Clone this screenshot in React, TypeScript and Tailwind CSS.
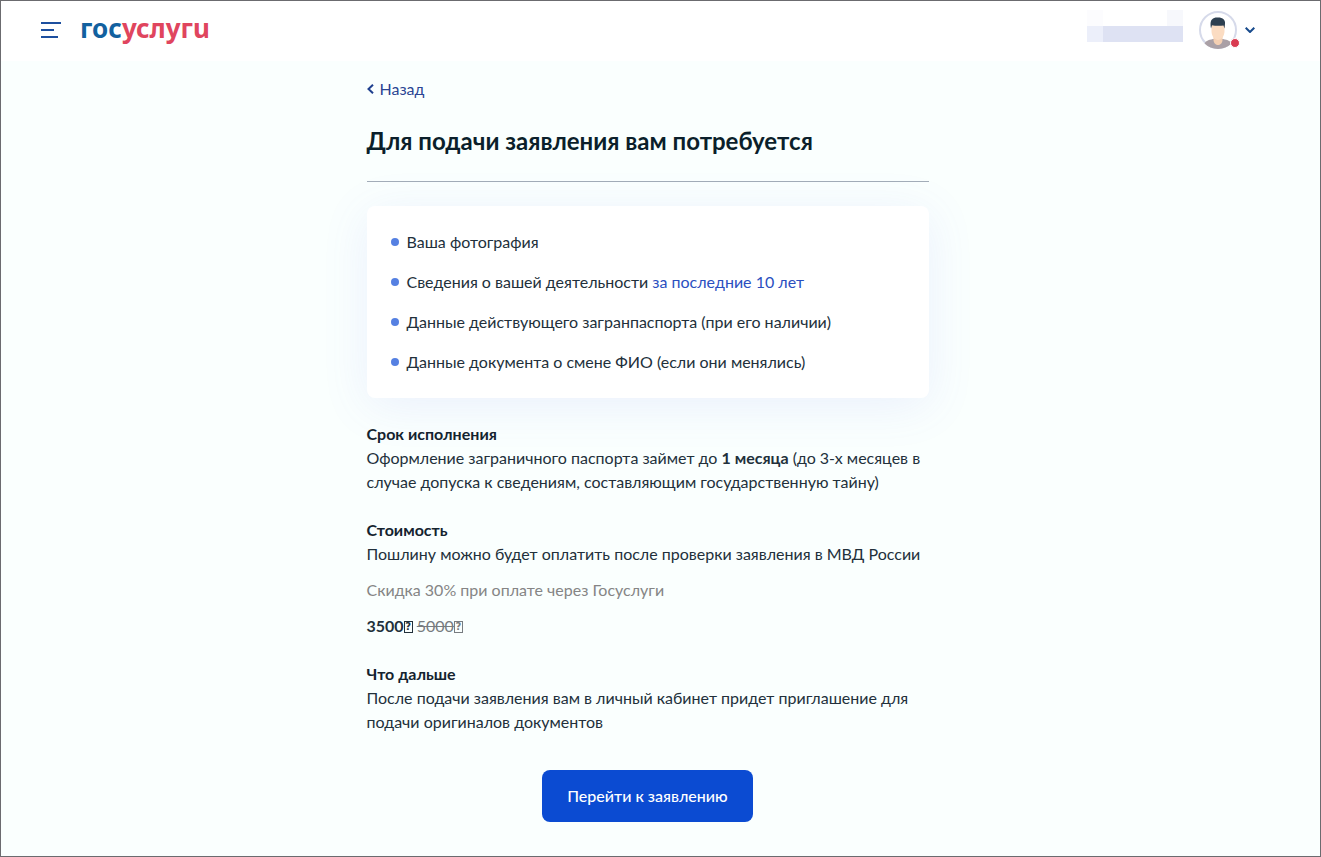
import React from "react";

const requirements: React.ReactNode[] = [
  "Ваша фотография",
  <>
    Сведения о вашей деятельности{" "}
    <a href="#period" className="text-[#2b4fbf]">
      за последние 10 лет
    </a>
  </>,
  "Данные действующего загранпаспорта (при его наличии)",
  "Данные документа о смене ФИО (если они менялись)",
];

function MissingGlyph() {
  return (
    <span className="inline-block h-3 w-[9px] border border-current text-center align-[2px] font-['DejaVu_Sans',sans-serif] text-[10px] leading-[10px] font-bold">
      ?
    </span>
  );
}

function Avatar() {
  return (
    <svg viewBox="0 0 38 38" className="size-[38px]" aria-hidden="true">
      <defs>
        <clipPath id="face">
          <circle cx="19" cy="19" r="19" />
        </clipPath>
      </defs>
      <circle cx="19" cy="19" r="18" fill="#fff" stroke="#d6daea" strokeWidth="2" />
      <g clipPath="url(#face)">
        <path d="M5 34c1-4 4-5 9-6h10c5 1 8 2 9 6l-6 6H11z" fill="#aaa0a6" />
        <path d="M14.500 23h9v6c0 3-2.500 5-4.500 5s-4.500-2-4.500-5z" fill="#f4cfb2" />
        <path d="M12.500 13c0-4 2-5 6.500-5s6.500 1 6.500 5v7c0 5-3 9-6.500 9s-6.500-4-6.500-9z" fill="#fbdcc2" />
        <path d="M12 17.500c-.8-5-.5-7.500 1-9 1.500-1.700 3.500-2.200 6-2 5 0 7.500 2.500 7 6.500l-.5 4.500-1-3c-3 .5-8.500.5-11.500-.3z" fill="#2d3f50" />
      </g>
    </svg>
  );
}

function Header() {
  return (
    <header className="flex h-[60px] items-center bg-white pr-[65px] pb-[3px] pl-10">
      <button type="button" aria-label="Меню" className="mr-[18px]">
        <svg viewBox="0 0 21 18" className="h-[18px] w-[21px]" fill="none" stroke="#1d4f9f" strokeWidth="2" aria-hidden="true">
          <path d="M0 2h20M0 9h13M0 16h17" />
        </svg>
      </button>
      <a href="#home" aria-label="Госуслуги" className="pb-1 font-['Noto_Sans',sans-serif] text-[26px] leading-8 font-bold text-[#12619f]">
        гос<span className="text-[#e0455e]">услугu</span>
      </a>
      <div className="ml-auto flex items-center gap-4">
        <div className="mb-2 flex h-8 w-24 flex-col" aria-hidden="true">
          <div className="flex h-4 justify-between">
            <span className="w-4 bg-[#fcfcfe]" />
            <span className="w-4 bg-[#f7f8fc]" />
          </div>
          <div className="flex h-4">
            <span className="w-4 bg-[#eceffa]" />
            <span className="flex-1 bg-[#dee2f3]" />
          </div>
        </div>
        <button type="button" aria-label="Профиль" className="flex items-center gap-2">
          <span className="relative">
            <Avatar />
            <span className="absolute -right-[3px] bottom-px size-[10px] rounded-full border border-white bg-[#d93a50]" />
          </span>
          <svg viewBox="0 0 10 6" className="h-[6px] w-[10px]" fill="none" stroke="#174a8c" strokeWidth="2" aria-hidden="true">
            <path d="M.7.7 5 5 9.300.7" />
          </svg>
        </button>
      </div>
    </header>
  );
}

function Section({ title, children }: { title: string; children: React.ReactNode }) {
  return (
    <section className="mt-6">
      <h2 className="font-bold text-[#14232f]">{title}</h2>
      {children}
    </section>
  );
}

export default function App() {
  return (
    <div className="min-h-screen border border-[#6b6b6f] bg-[#fafffe] font-[Lato,sans-serif] text-base leading-6 text-[#22303b]">
      <Header />
      <div className="pr-[26px]">
        <main className="mx-auto max-w-[562px] pt-4 pb-8">
          <a href="#back" className="inline-flex items-center gap-[6px] align-top text-[#2b4593]">
            <svg viewBox="0 0 7 10" className="h-[10px] w-[7px]" fill="none" stroke="#20408f" strokeWidth="2" aria-hidden="true">
              <path d="M6 .7 1.500 5 6 9.300" />
            </svg>
            Назад
          </a>
          <h1 className="mt-6 text-2xl leading-8 font-bold text-[#0b1f2b]">Для подачи заявления вам потребуется</h1>
          <hr className="mt-6 border-[#a3adb8]" />
          <ul className="mt-6 flex flex-col gap-4 rounded-lg bg-white p-6 shadow-[0_8px_48px_rgba(100,110,240,0.10)]">
            {requirements.map((item, index) => (
              <li key={index} className="flex items-center gap-2">
                <span className="size-2 rounded-full bg-[#5580e2]" />
                <span>{item}</span>
              </li>
            ))}
          </ul>
          <Section title="Срок исполнения">
            <p>
              Оформление заграничного паспорта займет до <b>1 месяца</b> (до 3-х месяцев в случае допуска к сведениям,
              составляющим государственную тайну)
            </p>
          </Section>
          <Section title="Стоимость">
            <p>Пошлину можно будет оплатить после проверки заявления в МВД России</p>
            <p className="mt-3 text-[#858585]">Скидка 30% при оплате через Госуслуги</p>
            <p className="mt-3">
              <b>
                3500
                <MissingGlyph />
              </b>{" "}
              <s className="text-[#777c80]">
                5000
                <MissingGlyph />
              </s>
            </p>
          </Section>
          <Section title="Что дальше">
            <p>После подачи заявления вам в личный кабинет придет приглашение для подачи оригиналов документов</p>
          </Section>
          <div className="mt-9 flex justify-center">
            <button type="button" className="h-[52px] rounded-lg bg-[#0b4bd2] px-[25px] font-medium text-white">
              Перейти к заявлению
            </button>
          </div>
        </main>
      </div>
    </div>
  );
}
